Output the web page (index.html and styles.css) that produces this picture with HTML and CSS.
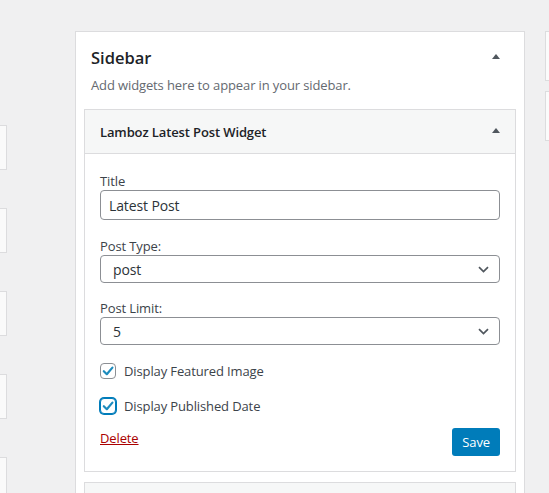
FILE: index.html
```html
<!DOCTYPE html>
<html lang="en">
<head>
<meta charset="utf-8">
<title>Widgets</title>
<link rel="stylesheet" href="styles.css">
</head>
<body>
<div class="page">
  <div class="col-left">
    <div class="stub"></div>
    <div class="stub"></div>
    <div class="stub"></div>
    <div class="stub"></div>
    <div class="stub"></div>
  </div>

  <div class="sidebar">
    <div class="sidebar-name">
      <h2 class="sidebar-title">Sidebar</h2>
      <svg class="toggle toggle-outer" width="8" height="5" viewBox="0 0 8 5"><polygon points="4,0 8,5 0,5" fill="#50575e"/></svg>
    </div>
    <p class="sidebar-desc">Add widgets here to appear in your sidebar.</p>

    <div class="widget">
      <div class="widget-top">
        <h3 class="widget-title">Lamboz Latest Post Widget</h3>
        <svg class="toggle" width="8" height="5" viewBox="0 0 8 5"><polygon points="4,0 8,5 0,5" fill="#50575e"/></svg>
      </div>
      <div class="widget-inside">
        <div class="field">
          <label class="field-label">Title</label>
          <div class="input">Latest Post</div>
        </div>
        <div class="field field-b">
          <label class="field-label">Post Type:</label>
          <div class="select">
            <span>post</span>
            <svg width="11" height="7" viewBox="0 0 11 7"><polyline points="1,1.2 5.5,5.6 10,1.2" fill="none" stroke="#50575e" stroke-width="1.7"/></svg>
          </div>
        </div>
        <div class="field field-c">
          <label class="field-label">Post Limit:</label>
          <div class="select">
            <span>5</span>
            <svg width="11" height="7" viewBox="0 0 11 7"><polyline points="1,1.2 5.5,5.6 10,1.2" fill="none" stroke="#50575e" stroke-width="1.7"/></svg>
          </div>
        </div>
        <div class="check-row check-first">
          <span class="checkbox">
            <svg width="14" height="14" viewBox="0 0 14 14"><polyline points="2.8,7.2 5.8,10.2 11.4,3.6" fill="none" stroke="#1e8cbe" stroke-width="2.2" stroke-linecap="round" stroke-linejoin="round"/></svg>
          </span>
          <span class="check-label">Display Featured Image</span>
        </div>
        <div class="check-row">
          <span class="checkbox checkbox-focus">
            <svg width="14" height="14" viewBox="0 0 14 14"><polyline points="2.8,7.2 5.8,10.2 11.4,3.6" fill="none" stroke="#1e8cbe" stroke-width="2.2" stroke-linecap="round" stroke-linejoin="round"/></svg>
          </span>
          <span class="check-label">Display Published Date</span>
        </div>
        <div class="actions">
          <a class="delete" href="#">Delete</a>
          <span class="button">Save</span>
        </div>
      </div>
    </div>

    <div class="widget widget-next">
      <div class="widget-top"></div>
    </div>
  </div>

  <div class="col-right">
    <div class="stub-r"></div>
    <div class="stub-r"></div>
  </div>
</div>
</body>
</html>
```

FILE: styles.css
```css
html, body {
  margin: 0;
  padding: 0;
  overflow: hidden;
  height: 100%;
  background: #f0f0f1;
}

body {
  font-family: "Open Sans", "Noto Sans", sans-serif;
  font-size: 13px;
  letter-spacing: -0.12px;
  color: #3c434a;
}

.page {
  display: flex;
  align-items: flex-start;
  height: 493px;
  overflow: hidden;
}

.col-left {
  width: 7px;
  flex: none;
  margin-top: 125px;
  height: 368px;
  overflow: hidden;
  display: flex;
  flex-direction: column;
  gap: 38px;
}

.stub {
  flex: none;
  height: 43px;
  background: #fafafa;
  border: 1px solid #dcdcde;
  border-left: none;
}

.sidebar {
  flex: none;
  width: 448px;
  margin-left: 68px;
  margin-top: 31px;
  background: #fff;
  border: 1px solid #dcdcde;
  border-bottom: none;
  height: 461px;
  overflow: hidden;
}

.sidebar-name {
  display: flex;
  align-items: center;
  justify-content: space-between;
  padding: 12px 24px 0 15px;
}

.sidebar-title {
  margin: 0;
  font-size: 16.5px;
  line-height: 27px;
  font-weight: 600;
  letter-spacing: 0;
  color: #1d2327;
}

.toggle {
  display: block;
  flex: none;
}

.toggle-outer {
  margin-top: -3px;
}

.sidebar-desc {
  margin: 5px 15px 0;
  line-height: 18px;
  color: #646970;
}

.widget {
  margin: 15px 8px 0;
  border: 1px solid #dcdcde;
  background: #fff;
}

.widget-next {
  margin-top: 10px;
  border-bottom: none;
}

.widget-top {
  height: 43px;
  background: #f6f7f7;
  display: flex;
  align-items: center;
  justify-content: space-between;
  padding: 0 15px;
}

.widget-next .widget-top {
  height: 10px;
}

.widget-title {
  margin: 0;
  font-size: 13px;
  font-weight: 600;
  color: #1d2327;
  line-height: 18px;
}

.widget-top .toggle {
  margin-top: -3px;
}

.widget-inside {
  border-top: 1px solid #dcdcde;
  padding: 18px 15px 15px;
}

.field-b {
  margin-top: 17px;
}

.field-c {
  margin-top: 16px;
}

.field-label {
  display: block;
  line-height: 18px;
  color: #3c434a;
}

.input {
  height: 28px;
  border: 1px solid #8c8f94;
  border-radius: 4px;
  padding: 0 8px;
  display: flex;
  align-items: center;
  font-size: 14px;
  color: #2c3338;
}

.select {
  height: 26px;
  border: 1px solid #8c8f94;
  border-radius: 4px;
  padding: 0 10px 0 12px;
  display: flex;
  align-items: center;
  justify-content: space-between;
  font-size: 14px;
  color: #2c3338;
}

.select svg {
  display: block;
}

.check-row {
  display: flex;
  align-items: center;
  gap: 8px;
  height: 16px;
  margin-top: 19px;
}

.check-first {
  margin-top: 18px;
}

.checkbox {
  width: 14px;
  height: 14px;
  border: 1px solid #8c8f94;
  border-radius: 4px;
  display: flex;
  align-items: center;
  justify-content: center;
  flex: none;
  background: #fff;
}

.checkbox svg {
  display: block;
}

.checkbox-focus {
  border-color: #007cba;
  box-shadow: 0 0 0 1px #007cba;
}

.check-label {
  line-height: 18px;
  color: #3c434a;
}

.actions {
  display: flex;
  justify-content: space-between;
  align-items: flex-start;
  margin-top: 14px;
}

.delete {
  color: #a00;
  text-decoration: underline;
  line-height: 20px;
}

.button {
  height: 28px;
  padding: 0 10px;
  background: #007cba;
  color: #fff;
  border-radius: 3px;
  display: flex;
  align-items: center;
  line-height: 1;
}

.col-right {
  flex: none;
  margin-left: 20px;
  margin-top: 31px;
  display: flex;
  flex-direction: column;
  gap: 10px;
}

.stub-r {
  width: 3px;
  height: 48px;
  background: #fbfbfb;
  border: 1px solid #dcdcde;
  border-right: none;
}
```
